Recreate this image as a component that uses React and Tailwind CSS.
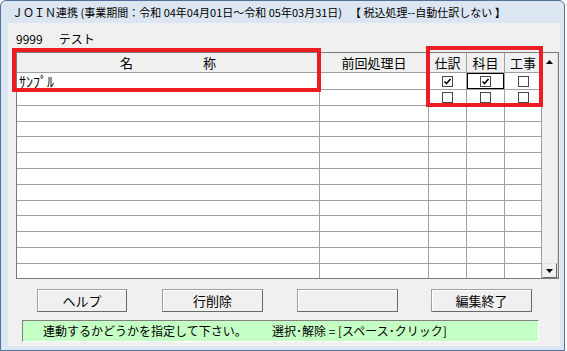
import React from 'react';

const rowHeights = [
  'h-[17px]', 'h-4', 'h-4', 'h-[15px]', 'h-4', 'h-4', 'h-4',
  'h-4', 'h-[15px]', 'h-4', 'h-4', 'h-4', 'h-[14px]',
];

const checks = [
  [true, true, false],
  [false, false, false],
];

function CheckBox({ checked }) {
  return (
    <div className="w-[11px] h-[11px] border border-[#4a4a4a] bg-white flex items-center justify-center">
      {checked && (
        <svg width="9" height="9" viewBox="0 0 9 9">
          <path d="M1.5 4.5 L3.5 6.5 L7.5 2" fill="none" stroke="#000" strokeWidth="1.6" />
        </svg>
      )}
    </div>
  );
}

function Button({ label, width }) {
  return (
    <div
      className={`${width} h-[23px] bg-[#f0f0f0] border border-[#a0a0a0] border-r-[#696969] border-b-[#696969] shadow-[inset_1px_1px_0_#ffffff] flex items-center justify-center text-[13px] text-black`}
    >
      {label}
    </div>
  );
}

export default function App() {
  return (
    <div className="relative w-[567px] h-[351px] bg-white font-['Noto_Sans_CJK_JP','Noto_Sans',sans-serif] text-black overflow-hidden">
      <div className="w-[565px] h-[351px] flex flex-col border border-[#52719a] rounded-t-[6px] bg-[#dbe6f2]">
        {/* title bar */}
        <div className="h-[22px] pl-[11px] pt-[3px] text-[11px] leading-[17px] whitespace-pre text-black flex">
          <span>ＪＯＩＮ連携 (事業期間：令和 04年04月01日～令和 05年03月31日)</span>
          <span className="ml-[8px]">【 税込処理--自動仕訳しない 】</span>
        </div>

        {/* client */}
        <div className="ml-[7px] mr-[4px] mb-[4px] h-[323px] bg-[#f0f0f0] flex flex-col">
          <div className="pt-[8px] pl-[8px] h-[24px] text-[12px] leading-[16px] flex">
            <span>9999</span>
            <span className="ml-[16px]">テスト</span>
          </div>

          {/* grid */}
          <div className="mt-[5px] ml-[8px] w-[543px] h-[227px] border border-[#7a7a7a] flex bg-white">
            <div className="w-[525px] flex flex-col">
              <div className="h-[20px] flex border-b border-[#a0a0a0] bg-[#f0f0f0] text-[13px] leading-[19px]">
                <div className="w-[303px] border-r border-[#a0a0a0] flex justify-center gap-[70px]">
                  <span>名</span>
                  <span>称</span>
                </div>
                <div className="w-[109px] border-r border-[#a0a0a0] text-center">前回処理日</div>
                <div className="w-[38px] border-r border-[#a0a0a0] text-center">仕訳</div>
                <div className="w-[38px] border-r border-[#a0a0a0] text-center">科目</div>
                <div className="w-[37px] border-r border-[#a0a0a0] text-center">工事</div>
              </div>
              {rowHeights.map((h, i) => (
                <div
                  key={i}
                  className={`${h} flex ${i < rowHeights.length - 1 ? 'border-b border-[#a0a0a0]' : ''}`}
                >
                  <div className="w-[303px] border-r border-[#a0a0a0] pl-[2px] text-[14px] leading-[16px]">
                    {i === 0 ? 'ｻﾝﾌﾟﾙ' : ''}
                  </div>
                  <div className="w-[109px] border-r border-[#a0a0a0]" />
                  {[0, 1, 2].map((c) => (
                    <div
                      key={c}
                      className={`${c === 2 ? 'w-[37px]' : 'w-[38px]'} border-r border-[#a0a0a0] flex items-center justify-center`}
                    >
                      <div
                        className={`w-full h-full flex items-center justify-center ${
                          i === 0 && c === 1 ? 'border border-black' : ''
                        }`}
                      >
                        {i < 2 && <CheckBox checked={checks[i][c]} />}
                      </div>
                    </div>
                  ))}
                </div>
              ))}
            </div>

            {/* scrollbar */}
            <div className="w-[16px] flex flex-col bg-[#f0f0f0] border-r border-[#dcdcdc]">
              <div className="h-[17px] flex items-center justify-center">
                <svg width="7" height="4" viewBox="0 0 7 4">
                  <path d="M0 4 L3.5 0 L7 4 Z" fill="#000" />
                </svg>
              </div>
              <div className="flex-1" />
              <div className="h-[15px] border border-[#e3e3e3] border-r-[#696969] border-b-[#696969] flex items-center justify-center">
                <svg width="7" height="4" viewBox="0 0 7 4">
                  <path d="M0 0 L7 0 L3.5 4 Z" fill="#000" />
                </svg>
              </div>
            </div>
          </div>

          {/* buttons */}
          <div className="mt-[10px] flex pl-[29px]">
            <Button label="ヘルプ" width="w-[90px]" />
            <div className="ml-[35px]">
              <Button label="行削除" width="w-[101px]" />
            </div>
            <div className="ml-[34px]">
              <Button label="" width="w-[101px]" />
            </div>
            <div className="ml-[33px]">
              <Button label="編集終了" width="w-[101px]" />
            </div>
          </div>

          {/* status */}
          <div className="mt-[8px] ml-[14px] w-[517px] h-[22px] bg-[#c4ffc4] border border-[#808080] border-r-white border-b-white flex items-center leading-[16px] whitespace-pre text-[12px]">
            <div className="ml-[20px] w-[229px] shrink-0">連動するかどうかを指定して下さい。</div>
            <div className="shrink-0">選択･解除 = [スペース･クリック]</div>
          </div>
        </div>
      </div>

      {/* annotation boxes */}
      <div className="absolute left-[12px] top-[48px] w-[309px] h-[44px] border-4 border-[#ed1c24]" />
      <div className="absolute left-[426px] top-[46px] w-[117px] h-[61px] border-4 border-[#ed1c24]" />
    </div>
  );
}
